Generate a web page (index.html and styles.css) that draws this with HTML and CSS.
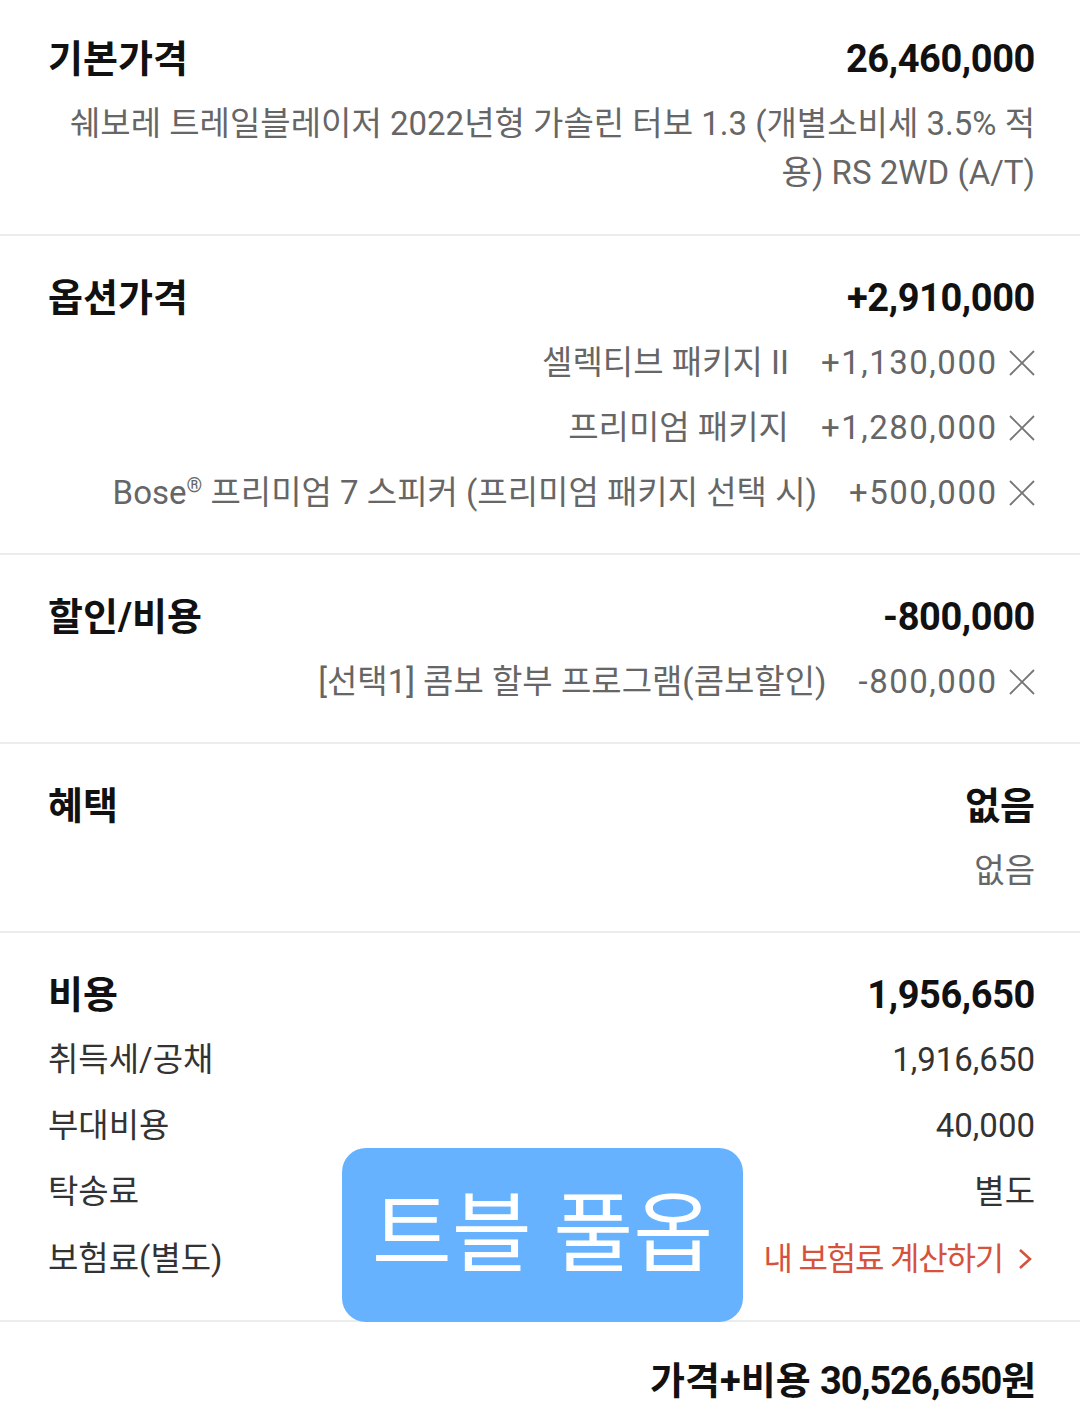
FILE: index.html
```html
<!DOCTYPE html>
<html lang="ko">
<head>
<meta charset="utf-8">
<link rel="stylesheet" href="styles.css">
</head>
<body>
<div class="page">
  <section class="section">
    <div class="head"><span>기본가격</span><span class="num">26,460,000</span></div>
    <p class="desc">쉐보레 트레일블레이저 2022년형 가솔린 터보 1.3 (개별소비세 3.5% 적용) RS 2WD (A/T)</p>
  </section>

  <section class="section">
    <div class="head"><span>옵션가격</span><span class="num">+2,910,000</span></div>
    <div class="item"><span class="name">셀렉티브 패키지 II</span><span class="price">+1,130,000</span><svg class="x" viewBox="0 0 26 26"><path d="M1 1L25 25M25 1L1 25"/></svg></div>
    <div class="item"><span class="name">프리미엄 패키지</span><span class="price">+1,280,000</span><svg class="x" viewBox="0 0 26 26"><path d="M1 1L25 25M25 1L1 25"/></svg></div>
    <div class="item"><span class="name">Bose<sup>®</sup> 프리미엄 7 스피커 (프리미엄 패키지 선택 시)</span><span class="price">+500,000</span><svg class="x" viewBox="0 0 26 26"><path d="M1 1L25 25M25 1L1 25"/></svg></div>
  </section>

  <section class="section">
    <div class="head"><span>할인/비용</span><span class="num">-800,000</span></div>
    <div class="item"><span class="name">[선택1] 콤보 할부 프로그램(콤보할인)</span><span class="price">-800,000</span><svg class="x" viewBox="0 0 26 26"><path d="M1 1L25 25M25 1L1 25"/></svg></div>
  </section>

  <section class="section">
    <div class="head"><span>혜택</span><span>없음</span></div>
    <div class="item"><span class="name">없음</span></div>
  </section>

  <section class="section">
    <div class="head"><span>비용</span><span class="num">1,956,650</span></div>
    <div class="cost"><span>취득세/공채</span><span>1,916,650</span></div>
    <div class="cost"><span>부대비용</span><span>40,000</span></div>
    <div class="cost"><span>탁송료</span><span>별도</span></div>
    <div class="cost"><span>보험료(별도)</span><span class="link">내 보험료 계산하기<svg class="chev" viewBox="0 0 14 22"><path d="M2 2L12 11L2 20"/></svg></span></div>
  </section>

  <div class="total"><span class="total-label">가격+비용</span> <span class="total-num">30,526,650원</span></div>

  <div class="badge">트블 풀옵</div>
</div>
</body>
</html>
```

FILE: styles.css
```css
* { box-sizing: border-box; }
html, body { margin: 0; padding: 0; background: #fff; }
body {
  font-family: Roboto, "Noto Sans CJK KR", sans-serif;
  color: #111;
}
.page {
  position: relative;
  width: 1080px;
  min-height: 1422px;
}
.section {
  padding: 38px 45px 36px 48px;
  border-bottom: 2px solid #ececec;
}
.section:first-child { padding-top: 35px; padding-bottom: 37px; }
.head {
  display: flex;
  justify-content: space-between;
  align-items: center;
  font-size: 38px;
  font-weight: 700;
  line-height: 48px;
}
.num { letter-spacing: -0.4px; }
.desc {
  margin: 16px 0 0 0;
  font-size: 33px;
  line-height: 49px;
  color: #666;
  text-align: right;
}
.item {
  display: flex;
  justify-content: flex-end;
  align-items: center;
  margin-top: 16px;
  font-size: 33px;
  line-height: 49px;
  color: #666;
}
.item .price { margin-left: 32px; letter-spacing: 1.5px; margin-right: -1.5px; }
.item sup { font-size: 20px; line-height: 0; vertical-align: 12px; }
.x {
  width: 26px;
  height: 26px;
  margin-left: 13px;
  fill: none;
  stroke: #777;
  stroke-width: 1.8;
}
.cost {
  display: flex;
  justify-content: space-between;
  align-items: center;
  margin-top: 16px;
  font-size: 33px;
  line-height: 50px;
  color: #333;
}
.cost:last-child { margin-top: 17px; }
.link {
  display: flex;
  align-items: center;
  font-size: 32px;
  color: #d5533d;
  letter-spacing: -1.2px;
}
.chev {
  width: 14px;
  height: 22px;
  margin-left: 15px;
  margin-right: 3px;
  fill: none;
  stroke: #d5533d;
  stroke-width: 2.6;
}
.total {
  padding: 35px 45px 0 48px;
  text-align: right;
  font-size: 38px;
  font-weight: 700;
  line-height: 48px;
}
.total-num { letter-spacing: -1.2px; }
.badge {
  position: absolute;
  left: 342px;
  top: 1148px;
  width: 401px;
  height: 174px;
  border-radius: 24px;
  background: #66b2ff;
  color: #fff;
  font-size: 87px;
  line-height: 174px;
  text-align: center;
}
```
